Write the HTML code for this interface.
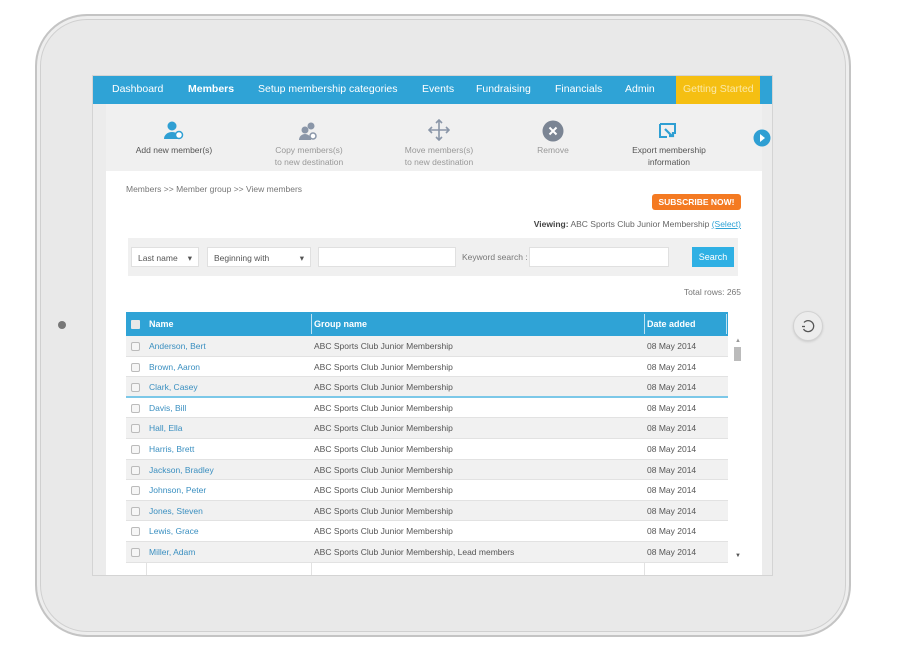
<!DOCTYPE html>
<html><head><style>
*{margin:0;padding:0;box-sizing:border-box}
body{width:901px;height:653px;background:#fff;position:relative;overflow:hidden;font-family:"Liberation Sans",sans-serif;}
.a{position:absolute}
.tab{left:35px;top:14px;width:816px;height:623px;border-radius:52px;background:#e9e9e9;border:2px solid #c4c4c4;box-shadow:inset 0 0 0 3px #eee,inset 0 0 0 4px #d0d0d0}
.scr{left:92px;top:75px;width:681px;height:501px;background:#fff;overflow:hidden;border:1px solid #d4d4d4}
.nav{left:0;top:0;width:681px;height:28px;background:#2fa3d6;color:#fff;font-size:10.5px}
.nav span{position:absolute;top:7px;white-space:nowrap}
.side{top:28px;width:13px;height:473px;background:#ececec}
.tb{left:13px;top:28px;width:656px;height:67px;background:#f0f0f0}
.tl{font-size:8.5px;color:#999;text-align:center;line-height:12px;width:120px}
.t{font-size:8.5px;color:#777;white-space:nowrap}
.row{left:33px;width:602px;height:20.6px;font-size:8.5px;border-bottom:1px solid #e2e2e2}
.row span{position:absolute;top:5px;white-space:nowrap}
.cb{position:absolute;left:5px;top:6px;width:9px;height:9px;border:1px solid #bbb;border-radius:2px;background:#f6f6f6}
</style></head><body>
<div class="a tab"></div>
<div class="a" style="left:58px;top:321px;width:8px;height:8px;border-radius:50%;background:#777"></div>
<div class="a" style="left:793px;top:311px;width:30px;height:30px;border-radius:50%;background:#ececec;border:1px solid #d2d2d2;box-shadow:0 1px 2px #ccc"></div>
<svg class="a" style="left:799px;top:317px" width="18" height="18" viewBox="0 0 18 18"><path d="M5 5.5A5.5 5.5 0 1 1 4.5 12" fill="none" stroke="#555" stroke-width="1.3"/><path d="M3 9.5h3" stroke="#555" stroke-width="1.3"/></svg>
<div class="a scr">
 <div class="a nav">
  <span style="left:19px">Dashboard</span>
  <span style="left:95px;font-weight:bold">Members</span>
  <span style="left:165px">Setup membership categories</span>
  <span style="left:329px">Events</span>
  <span style="left:383px">Fundraising</span>
  <span style="left:462px">Financials</span>
  <span style="left:532px">Admin</span>
  <div class="a" style="left:583px;top:0;width:84px;height:28px;background:#f5bf12"></div>
  <span style="left:590px;color:#fbe9a8">Getting Started</span>
 </div>
 <div class="a side" style="left:0"></div>
 <div class="a side" style="left:669px"></div>
 <div class="a tb"></div>
 <svg class="a" style="left:70px;top:45px" width="22" height="20" viewBox="0 0 22 20"><circle cx="9" cy="5" r="4.5" fill="#2f9fd3"/><path d="M1 18a8 7 0 0 1 16 0z" fill="#2f9fd3"/><circle cx="16" cy="14" r="3.5" fill="#fff" stroke="#2f9fd3" stroke-width="1.5"/></svg>
 <div class="a tl" style="left:21px;top:68px;color:#555">Add new member(s)</div>
 <svg class="a" style="left:205px;top:46px" width="22" height="20" viewBox="0 0 22 20"><circle cx="13" cy="4" r="3.5" fill="#8a96a8"/><circle cx="7" cy="8" r="3.5" fill="#8a96a8"/><path d="M1 18a6 6 0 0 1 12 0z" fill="#8a96a8"/><circle cx="15" cy="14" r="3" fill="#fff" stroke="#8a96a8" stroke-width="1.5"/></svg>
 <div class="a tl" style="left:156px;top:68px">Copy members(s)<br>to new destination</div>
 <svg class="a" style="left:335px;top:43px" width="22" height="22" viewBox="0 0 22 22"><path d="M11 1v20M1 11h20" stroke="#8a96a8" stroke-width="1.6"/><path d="M8 4l3-3 3 3M8 18l3 3 3-3M4 8l-3 3 3 3M18 8l3 3-3 3" fill="none" stroke="#8a96a8" stroke-width="1.6"/></svg>
 <div class="a tl" style="left:286px;top:68px">Move members(s)<br>to new destination</div>
 <svg class="a" style="left:449px;top:44px" width="22" height="22" viewBox="0 0 22 22"><circle cx="11" cy="11" r="10.5" fill="#7b8594"/><path d="M7.5 7.5l7 7M14.5 7.5l-7 7" stroke="#fff" stroke-width="2"/></svg>
 <div class="a tl" style="left:400px;top:68px">Remove</div>
 <svg class="a" style="left:564px;top:46px" width="22" height="20" viewBox="0 0 22 20"><path d="M3 2h15v10M3 2v13h7" fill="none" stroke="#2f9fd3" stroke-width="2"/><path d="M8 7l7 7M12 14h4v-4" fill="none" stroke="#2f9fd3" stroke-width="2.2"/></svg>
 <div class="a tl" style="left:516px;top:68px;color:#555">Export membership<br>information</div>
 <svg class="a" style="left:660px;top:53px" width="18" height="18" viewBox="0 0 18 18"><circle cx="9" cy="9" r="8.5" fill="#2f9fd3"/><path d="M7 5l5 4-5 4z" fill="#fff"/></svg>

 <div class="a t" style="left:33px;top:108px">Members &gt;&gt; Member group &gt;&gt; View members</div>
 <div class="a" style="left:559px;top:118px;width:89px;height:16px;border-radius:3px;background:#f47a22;color:#fff;font-size:8.5px;font-weight:bold;text-align:center;line-height:16px;white-space:nowrap">SUBSCRIBE NOW!</div>
 <div class="a t" style="left:348px;top:143px;width:300px;text-align:right;color:#666"><b style="color:#444">Viewing:</b> ABC Sports Club Junior Membership <span style="color:#2fa3d6;text-decoration:underline">(Select)</span></div>
 <div class="a" style="left:35px;top:162px;width:610px;height:38px;background:#f0f0f0"></div>
 <div class="a t" style="left:38px;top:171px;width:68px;height:20px;background:#fff;border:1px solid #e0e0e0;padding:5px 6px;color:#555">Last name<span style="float:right">▾</span></div>
 <div class="a t" style="left:114px;top:171px;width:104px;height:20px;background:#fff;border:1px solid #e0e0e0;padding:5px 6px;color:#555">Beginning with<span style="float:right">▾</span></div>
 <div class="a" style="left:225px;top:171px;width:138px;height:20px;background:#fff;border:1px solid #e0e0e0"></div>
 <div class="a t" style="left:369px;top:176px">Keyword search :</div>
 <div class="a" style="left:436px;top:171px;width:140px;height:20px;background:#fff;border:1px solid #e0e0e0"></div>
 <div class="a" style="left:599px;top:171px;width:42px;height:20px;background:#2fb0e4;color:#fff;font-size:9px;text-align:center;line-height:20px">Search</div>
 <div class="a t" style="left:540px;top:211px;width:108px;text-align:right">Total rows: 265</div>

 <div class="a" style="left:33px;top:236px;width:602px;height:24px;background:#2fa3d6;color:#fff;font-size:9px;font-weight:bold">
  <div class="a" style="left:5px;top:8px;width:9px;height:9px;background:#e8e8e8;border-radius:1px"></div>
  <span class="a" style="left:23px;top:7px">Name</span>
  <span class="a" style="left:188px;top:7px">Group name</span>
  <span class="a" style="left:521px;top:7px">Date added</span>
  <div class="a" style="left:185px;top:2px;width:1px;height:20px;background:#bfe2f3"></div>
  <div class="a" style="left:518px;top:2px;width:1px;height:20px;background:#bfe2f3"></div>
  <div class="a" style="left:600px;top:2px;width:1px;height:20px;background:#bfe2f3"></div>
 </div>
 <div class="a" style="left:53px;top:260px;width:1px;height:241px;background:#e2e2e2"></div>
 <div class="a" style="left:218px;top:260px;width:1px;height:241px;background:#e2e2e2"></div>
 <div class="a" style="left:551px;top:260px;width:1px;height:241px;background:#e2e2e2"></div>
 <div class="a" style="left:641px;top:271px;width:7px;height:14px;background:#bbb"></div>
 <div class="a" style="left:642px;top:262px;font-size:6px;color:#999">▲</div>
 <div class="a" style="left:642px;top:477px;font-size:6px;color:#555">▼</div>
</div>
<div id="rows"></div>
<script>
var n=[["Anderson, Bert",""],["Brown, Aaron",""],["Clark, Casey",""],["Davis, Bill",""],["Hall, Ella",""],["Harris, Brett",""],["Jackson, Bradley",""],["Johnson, Peter",""],["Jones, Steven",""],["Lewis, Grace",""],["Miller, Adam",", Lead members"]];
var h="";
n.forEach(function(r,i){var top=75+1+260+i*20.6;
h+='<div class="a row" style="left:126px;top:'+top+'px;background:'+(i%2==0?'#f1f1f1':'#fff')+(i==2?';border-bottom:2px solid #7cc8e8':'')+'"><div class="cb"></div><span style="left:23px;color:#3a8fc0">'+r[0]+'</span><span style="left:188px;color:#555">ABC Sports Club Junior Membership'+r[1]+'</span><span style="left:521px;color:#555">08 May 2014</span></div>';});
document.getElementById("rows").innerHTML=h;
</script>
</body></html>
